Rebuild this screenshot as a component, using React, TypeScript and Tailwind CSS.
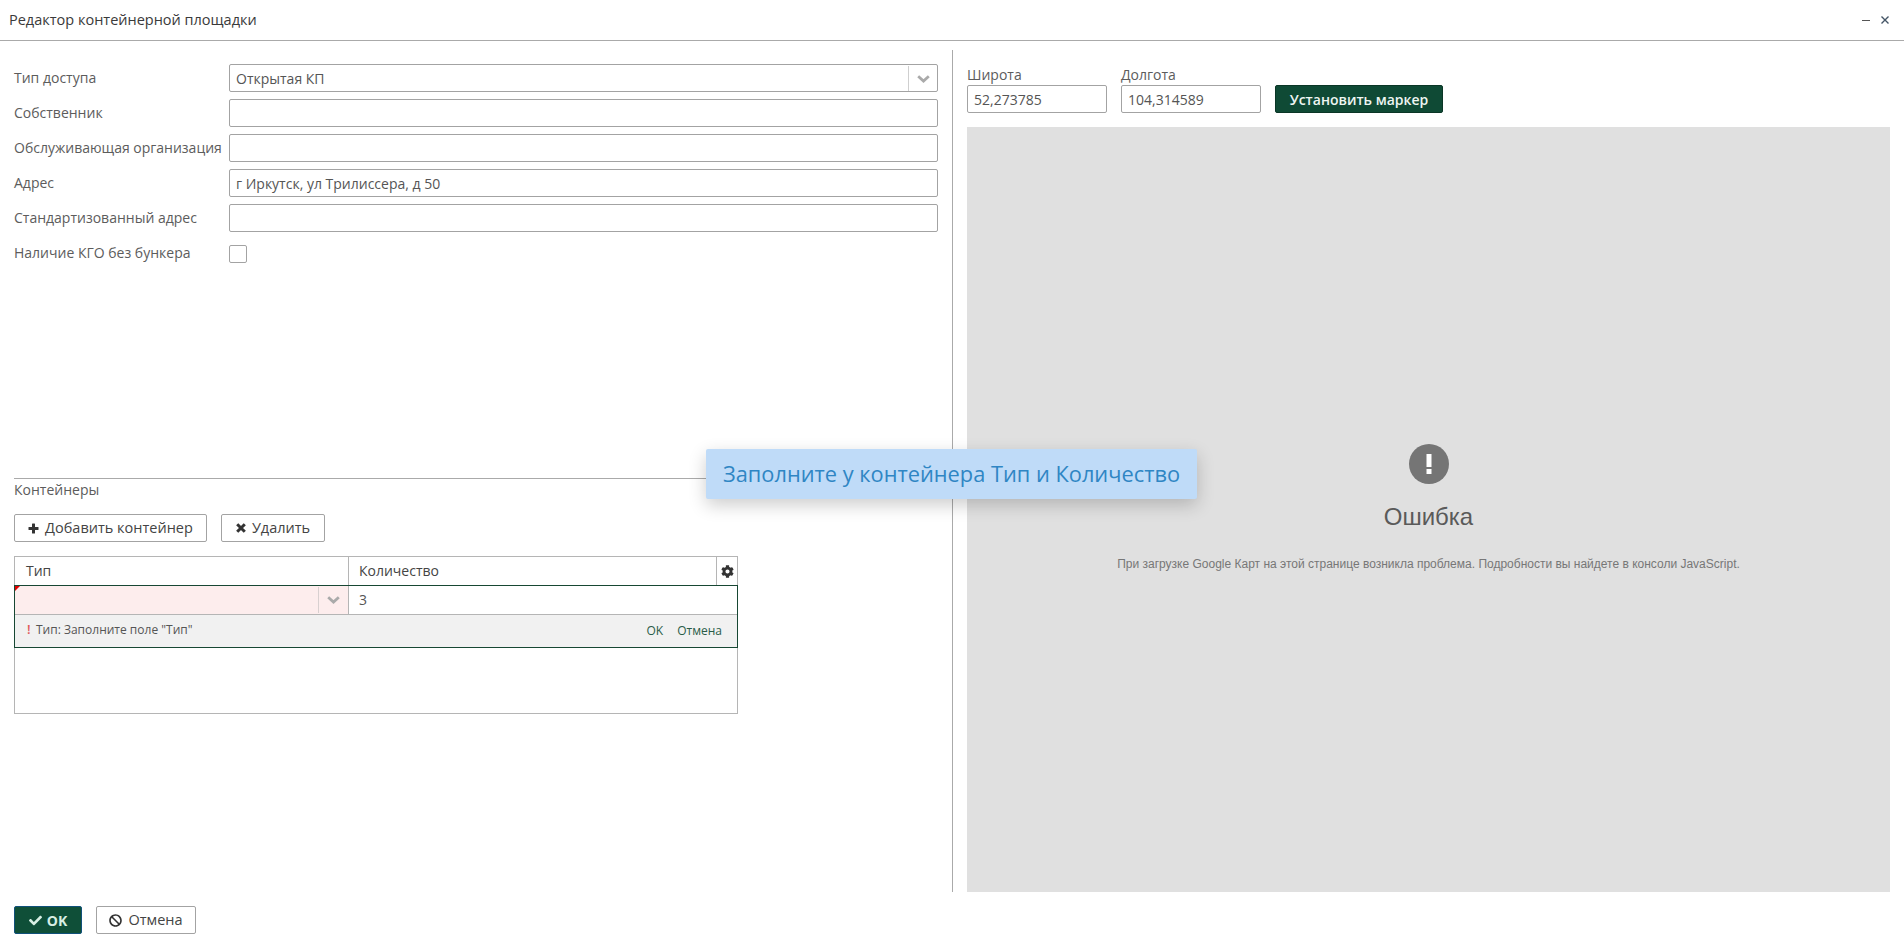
import React from 'react';
import { FaBan, FaCheck, FaCog } from 'react-icons/fa';

const fields = [
  { label: 'Собственник', value: '' },
  { label: 'Обслуживающая организация', value: '' },
  { label: 'Адрес', value: 'г Иркутск, ул Трилиссера, д 50' },
  { label: 'Стандартизованный адрес', value: '' },
];

const inputClass =
  'h-[28px] border border-[#a3a3a3] rounded-[2px] px-[6px] pt-[1px] flex items-center text-[14px] text-[#555] bg-white';

const Chevron = () => (
  <svg width="13" height="8" viewBox="0 0 13 8" fill="none" stroke="#aaaaaa" strokeWidth="2.8">
    <path d="M1.2 1.2 L6.5 6 L11.8 1.2" />
  </svg>
);

const PlusIcon = () => (
  <svg width="11" height="11" viewBox="0 0 11 11" fill="#333333">
    <rect x="4" y="0.5" width="3" height="10" rx="0.5" />
    <rect x="0.5" y="4" width="10" height="3" rx="0.5" />
  </svg>
);

const CrossIcon = () => (
  <svg width="10" height="10" viewBox="0 0 10 10" fill="none" stroke="#333333" strokeWidth="3">
    <path d="M1.2 1.2 L8.8 8.8 M8.8 1.2 L1.2 8.8" />
  </svg>
);

const Row: React.FC<{ label: string; children: React.ReactNode }> = ({ label, children }) => (
  <div className="flex items-center h-[28px]">
    <div className="w-[215px] shrink-0 text-[14px] text-[#5c5c5c] leading-[20px] -mt-[1px]">{label}</div>
    {children}
  </div>
);

const Button: React.FC<{ icon: React.ReactNode; label: string; width: string }> = ({ icon, label, width }) => (
  <button className={`${width} h-[28px] border border-[#a3a3a3] rounded-[2px] bg-white flex items-center justify-center gap-[6px] text-[14.5px] font-medium text-[#444]`}>
    {icon}
    {label}
  </button>
);

export default function App() {
  return (
    <div className="relative h-screen flex flex-col bg-white overflow-hidden font-['Open_Sans',sans-serif]">
      {/* Title bar */}
      <div className="h-[41px] shrink-0 border-b border-[#aaaaaa] flex items-center justify-between pl-[9px] pr-[15px]">
        <div className="text-[14.5px] font-medium text-[#3a3a3a] -mt-[1px]">Редактор контейнерной площадки</div>
        <div className="flex items-center gap-[11px]">
          <div className="w-[8px] h-[1px] bg-[#555]" />
          <svg width="8" height="8" viewBox="0 0 8 8" fill="none" stroke="#445566" strokeWidth="1.4">
            <path d="M0.5 0.5 L7.5 7.5 M7.5 0.5 L0.5 7.5" />
          </svg>
        </div>
      </div>

      <div className="flex flex-1 min-h-0 pt-[9px]">
        {/* Left panel */}
        <div className="w-[953px] shrink-0 border-r border-[#aaaaaa] pl-[14px] pr-[14px] flex flex-col">
          <div className="flex-1 pt-[14px] flex flex-col gap-[7px]">
            <Row label="Тип доступа">
              <div className={`${inputClass} flex-1 pr-0 justify-between`}>
                <span>Открытая КП</span>
                <div className="w-[29px] h-full border-l border-[#cfcfcf] flex items-center justify-center">
                  <Chevron />
                </div>
              </div>
            </Row>
            {fields.map((f) => (
              <Row key={f.label} label={f.label}>
                <div className={`${inputClass} flex-1`}>{f.value}</div>
              </Row>
            ))}
            <Row label="Наличие КГО без бункера">
              <div className="w-[18px] h-[18px] border border-[#a3a3a3] rounded-[2px] mt-[2px]" />
            </Row>
          </div>

          {/* Containers section */}
          <div className="h-[414px] shrink-0 border-t border-[#aaaaaa] flex flex-col">
            <div className="h-[22px] text-[14px] leading-[22px] text-[#5c5c5c]">Контейнеры</div>
            <div className="flex gap-[14px] mt-[13px]">
              <Button icon={<PlusIcon />} label="Добавить контейнер" width="w-[193px]" />
              <Button icon={<CrossIcon />} label="Удалить" width="w-[104px]" />
            </div>

            <div className="relative mt-[14px] w-[724px] h-[158px] border border-[#b5b5b5]">
              <div className="flex h-[28px] text-[14px] font-medium text-[#444]">
                <div className="w-[334px] border-r border-[#b5b5b5] pl-[11px] leading-[27px]">Тип</div>
                <div className="flex-1 border-r border-[#b5b5b5] pl-[10px] leading-[27px]">Количество</div>
                <div className="w-[20px] flex items-center justify-center">
                  <FaCog className="w-[13px] h-[13px] text-[#333]" />
                </div>
              </div>
              <div className="border border-[#174733] -mx-[1px] h-[63px]">
                <div className="flex h-[29px] border-b border-[#b5b5b5]">
                  <div className="relative w-[334px] bg-[#fdeded] border-r border-[#b5b5b5] flex justify-end">
                    <div className="absolute top-0 left-0 w-0 h-0 border-t-[5px] border-t-[#e00000] border-r-[5px] border-r-transparent" />
                    <div className="w-[30px] my-[1px] border-l border-[#d8d0d0] flex items-center justify-center">
                      <Chevron />
                    </div>
                  </div>
                  <div className="flex-1 pl-[10px] text-[14px] leading-[28px] text-[#555]">3</div>
                </div>
                <div className="h-[32px] bg-[#f1f1f1] flex items-center justify-between pl-[12px] pr-[15px] text-[12px] text-[#555]">
                  <div className="flex items-center -mt-[2px]">
                    <span className="w-[9px] text-[13px] font-semibold text-[#e05a5a]">!</span>
                    <span>Тип: Заполните поле "Тип"</span>
                  </div>
                  <div className="flex gap-[14px] text-[#2a5c48] -mt-[1px]">
                    <span>OK</span>
                    <span>Отмена</span>
                  </div>
                </div>
              </div>
            </div>
          </div>
        </div>

        {/* Right panel */}
        <div className="flex-1 min-w-0 pl-[14px] pr-[14px] flex flex-col">
          <div className="flex items-end gap-[14px] h-[63px] shrink-0">
            <div className="w-[140px]">
              <div className="text-[14px] leading-[20px] text-[#5c5c5c]">Широта</div>
              <div className={inputClass}>52,273785</div>
            </div>
            <div className="w-[140px]">
              <div className="text-[14px] leading-[20px] text-[#5c5c5c]">Долгота</div>
              <div className={inputClass}>104,314589</div>
            </div>
            <button className="w-[168px] h-[28px] rounded-[2px] bg-[#0f4a35] border border-[#0a3626] text-[#eef6f2] text-[14px] font-semibold">
              Установить маркер
            </button>
          </div>
          <div className="h-[765px] mt-[14px] bg-[#e0e0e0] flex flex-col items-center font-['Liberation_Sans',sans-serif]">
            <div className="mt-[317px] w-[40px] h-[40px] rounded-full bg-[#757575] flex items-center justify-center">
              <svg width="6" height="20" viewBox="0 0 6 20" fill="#ffffff">
                <rect x="0.5" y="0" width="5" height="13" />
                <rect x="0.5" y="15" width="5" height="5" />
              </svg>
            </div>
            <div className="mt-[19px] text-[24px] leading-[28px] text-[#5a5a5a]">Ошибка</div>
            <div className="mt-[25px] text-[12px] leading-[16px] text-[#777]">
              При загрузке Google Карт на этой странице возникла проблема. Подробности вы найдете в консоли JavaScript.
            </div>
          </div>
        </div>
      </div>

      {/* Footer */}
      <div className="h-[56px] shrink-0 pl-[14px] pt-[14px] flex gap-[14px]">
        <button className="w-[68px] h-[28px] rounded-[2px] bg-[#0f4f38] border border-[#10517a] flex items-center justify-center gap-[5px] text-[14px] font-bold text-[#d8efe4]">
          <FaCheck className="w-[13px] h-[13px]" />
          OK
        </button>
        <Button icon={<FaBan className="w-[13px] h-[13px] text-[#333]" />} label="Отмена" width="w-[100px]" />
      </div>

      {/* Toast */}
      <div className="absolute top-[449px] left-[706px] w-[491px] h-[50px] rounded-[2px] bg-[#bfdbf8] shadow-[0_6px_18px_rgba(0,0,0,0.2)] flex items-center justify-center text-[21.8px] text-[#2f86c4]">
        Заполните у контейнера Тип и Количество
      </div>
    </div>
  );
}
